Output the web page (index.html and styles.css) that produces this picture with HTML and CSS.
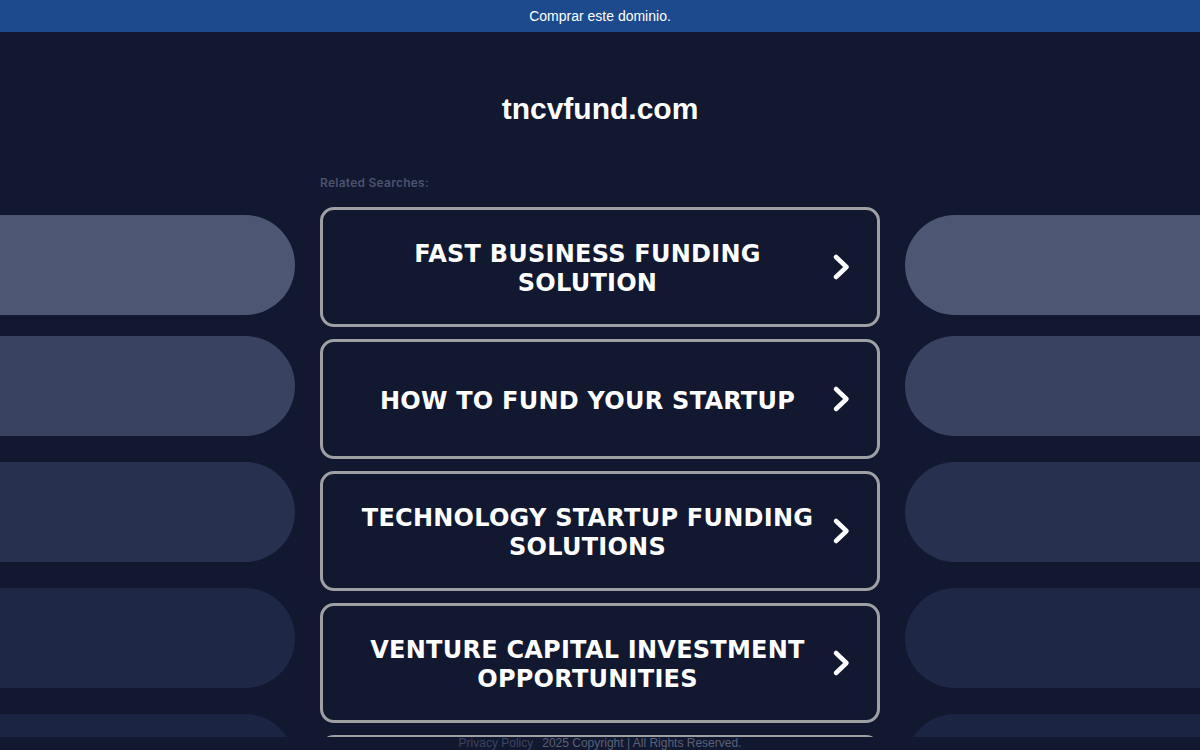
FILE: index.html
```html
<!DOCTYPE html>
<html lang="es">
<head>
<meta charset="utf-8">
<title>tncvfund.com</title>
<link rel="stylesheet" href="styles.css">
</head>
<body>
<div class="topbar">Comprar este dominio.</div>
<h1 class="title">tncvfund.com</h1>
<div class="layout">
  <div class="pills pills-left">
    <div class="pill pill-1 pill-first"></div>
    <div class="pill pill-2"></div>
    <div class="pill pill-3"></div>
    <div class="pill pill-4"></div>
    <div class="pill pill-5"></div>
  </div>
  <div class="main">
    <div class="label">Related Searches:</div>
    <div class="cards">
      <a class="card" href="#"><span class="card-text">FAST BUSINESS FUNDING SOLUTION</span><svg class="chev" width="20" height="30" viewBox="0 0 20 30"><polyline points="5,5 15.5,15 5,25" fill="none" stroke="#fff" stroke-width="4.5" stroke-linecap="round" stroke-linejoin="round"/></svg></a>
      <a class="card" href="#"><span class="card-text">HOW TO FUND YOUR STARTUP</span><svg class="chev" width="20" height="30" viewBox="0 0 20 30"><polyline points="5,5 15.5,15 5,25" fill="none" stroke="#fff" stroke-width="4.5" stroke-linecap="round" stroke-linejoin="round"/></svg></a>
      <a class="card" href="#"><span class="card-text">TECHNOLOGY STARTUP FUNDING SOLUTIONS</span><svg class="chev" width="20" height="30" viewBox="0 0 20 30"><polyline points="5,5 15.5,15 5,25" fill="none" stroke="#fff" stroke-width="4.5" stroke-linecap="round" stroke-linejoin="round"/></svg></a>
      <a class="card" href="#"><span class="card-text">VENTURE CAPITAL INVESTMENT OPPORTUNITIES</span><svg class="chev" width="20" height="30" viewBox="0 0 20 30"><polyline points="5,5 15.5,15 5,25" fill="none" stroke="#fff" stroke-width="4.5" stroke-linecap="round" stroke-linejoin="round"/></svg></a>
      <a class="card" href="#"><span class="card-text"></span><svg class="chev" width="20" height="30" viewBox="0 0 20 30"><polyline points="5,5 15.5,15 5,25" fill="none" stroke="#fff" stroke-width="4.5" stroke-linecap="round" stroke-linejoin="round"/></svg></a>
    </div>
  </div>
  <div class="pills pills-right">
    <div class="pill pill-1 pill-first"></div>
    <div class="pill pill-2"></div>
    <div class="pill pill-3"></div>
    <div class="pill pill-4"></div>
    <div class="pill pill-5"></div>
  </div>
</div>
<div class="footer"><a class="privacy" href="#">Privacy Policy</a><span class="copy">2025 Copyright | All Rights Reserved.</span></div>
</body>
</html>
```

FILE: styles.css
```css
html, body {
  margin: 0;
  padding: 0;
}
body {
  background: #111830;
  height: 100vh;
  overflow: hidden;
  font-family: "Liberation Sans", Arial, sans-serif;
  color: #fff;
}
.topbar {
  height: 32px;
  line-height: 32px;
  background: #1c4a8c;
  color: #fff;
  font-size: 14px;
  text-align: center;
}
.title {
  margin: 59px 0 0;
  font-size: 30px;
  line-height: 36px;
  font-weight: bold;
  text-align: center;
  color: #fff;
}
.layout {
  margin-top: 48px;
  display: grid;
  grid-template-columns: 295px 560px 295px;
  column-gap: 25px;
}
.pills {
  padding-top: 40px;
  display: flex;
  flex-direction: column;
  gap: 26px;
}
.pill {
  height: 100px;
}
.pill-first {
  margin-bottom: -5px;
}
.pills-left .pill {
  border-radius: 0 50px 50px 0;
}
.pills-right .pill {
  border-radius: 50px 0 0 50px;
}
.pill-1 { background: #4d5673; }
.pill-2 { background: #3a4261; }
.pill-3 { background: #283050; }
.pill-4 { background: #1f2747; }
.pill-5 { background: #1c2444; }
.label {
  font-family: Inter, "Liberation Sans", sans-serif;
  font-size: 12px;
  font-weight: 600;
  line-height: 16px;
  letter-spacing: 0.25px;
  color: #4c526f;
  margin-bottom: 16px;
}
.cards {
  display: flex;
  flex-direction: column;
  gap: 12px;
}
.card {
  box-sizing: border-box;
  height: 120px;
  border: 3px solid #9ea0a4;
  border-radius: 14px;
  background: #111830;
  display: flex;
  align-items: center;
  padding: 4px 26px 0 29px;
  text-decoration: none;
  color: #fff;
}
.card-text {
  flex: 1;
  text-align: center;
  font-family: "DejaVu Sans", Verdana, sans-serif;
  font-weight: bold;
  font-size: 24px;
  line-height: 29px;
  letter-spacing: 0.25px;
  color: #fff;
}
.chev {
  flex: none;
  margin-left: 8px;
  margin-top: -4px;
  display: block;
}
.footer {
  position: fixed;
  left: 0;
  right: 0;
  bottom: 0;
  height: 13px;
  line-height: 12px;
  background: #111830;
  text-align: center;
  font-size: 12px;
  overflow: hidden;
}
.privacy {
  color: #3d4461;
  text-decoration: none;
  margin-right: 9px;
}
.copy {
  color: #5a6079;
}
```
